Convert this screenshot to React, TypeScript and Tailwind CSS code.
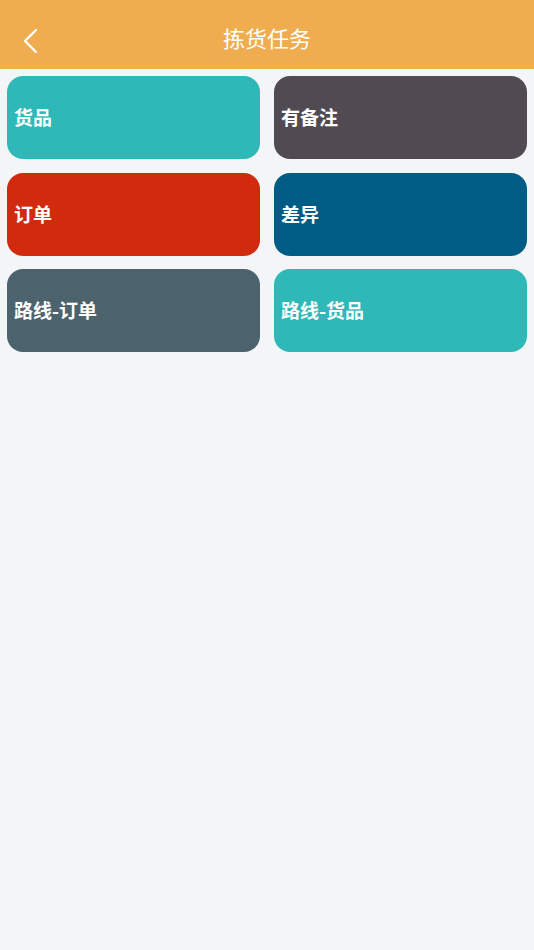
const tiles = [
  { label: "货品", color: "bg-[#2eb8b7]" },
  { label: "有备注", color: "bg-[#514a52]" },
  { label: "订单", color: "bg-[#d22a0f]" },
  { label: "差异", color: "bg-[#005c84]" },
  { label: "路线-订单", color: "bg-[#4c636e]" },
  { label: "路线-货品", color: "bg-[#2eb8b7]" },
];

export default function App() {
  return (
    <div
      className="flex min-h-[950px] w-full flex-col bg-[#f3f5f7]"
      style={{ fontFamily: '"Noto Sans CJK SC", "Noto Sans", sans-serif' }}
    >
      <header className="relative flex h-[69px] items-center justify-center bg-[#f0ad4f] pt-[6px]">
        <button className="absolute left-[20px] top-[27px] flex h-[28px] w-[20px] items-center justify-center">
          <svg width="16" height="26" viewBox="0 0 16 26" fill="none">
            <path d="M14 2 L3 13 L14 24" stroke="white" strokeWidth="2.4" strokeLinecap="round" strokeLinejoin="round" />
          </svg>
        </button>
        <h1 className="text-[22px] font-normal text-white">拣货任务</h1>
      </header>
      <div className="grid grid-cols-2 gap-x-[14px] gap-y-[13.5px] p-[7px]">
        {tiles.map((t, i) => (
          <div
            key={i}
            className={`flex h-[83px] items-center rounded-[16px] px-[7px] ${t.color}`}
          >
            <span className="text-[19px] font-bold text-white">{t.label}</span>
          </div>
        ))}
      </div>
    </div>
  );
}
